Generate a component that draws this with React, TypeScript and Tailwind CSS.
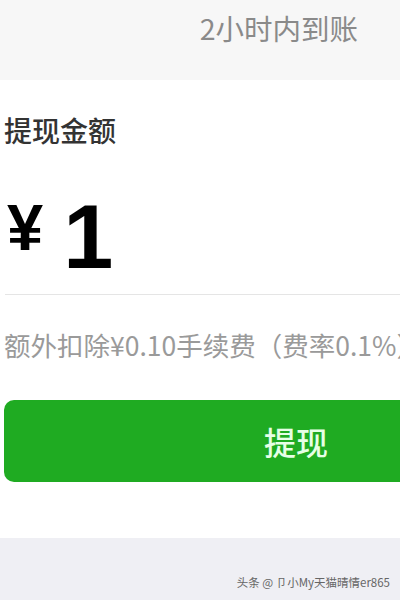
export default function App() {
  const cjk = { fontFamily: '"Noto Sans CJK SC", "Noto Sans", sans-serif' };

  return (
    <div className="w-[400px] h-[600px] overflow-hidden bg-white flex flex-col" style={cjk}>
      {/* Arrival time header */}
      <div className="h-[80px] bg-[#f7f7f7] flex justify-end pr-[42px] pt-[8px]">
        <span className="text-[28.5px] leading-[40px] text-[#8a8a8a]">2小时内到账</span>
      </div>

      {/* Withdraw form */}
      <div className="flex-1 bg-white pl-[4px] pt-[31px]">
        <div className="text-[28px] leading-[38px] font-medium text-[#333]">提现金额</div>

        <div className="flex items-end h-[145px] pb-[12px] font-['Liberation_Sans',sans-serif] font-bold text-black">
          <span className="text-[65px] leading-none mb-[22px] ml-[3px]">¥</span>
          <span className="text-[90px] leading-none ml-[20px]">1</span>
        </div>

        <div className="h-px bg-[#e5e5e5] ml-px" />

        <div className="mt-[32px] text-[26.5px] leading-[36px] text-[#9a9a9a] whitespace-nowrap">
          额外扣除¥0.10手续费（费率0.1%）
        </div>

        <button className="mt-[37px] w-[584px] h-[82px] rounded-[10px] bg-[#1fab22] text-[32px] font-medium text-[#e6ffe6] flex items-center justify-center">
          提现
        </button>
      </div>

      {/* Footer */}
      <div className="h-[62px] bg-[#efeff4] flex justify-end items-end pr-[10px] pb-[9px]">
        <span className="text-[11.5px] text-[#666]">头条 @ 卩小My天猫晴情er865</span>
      </div>
    </div>
  );
}
